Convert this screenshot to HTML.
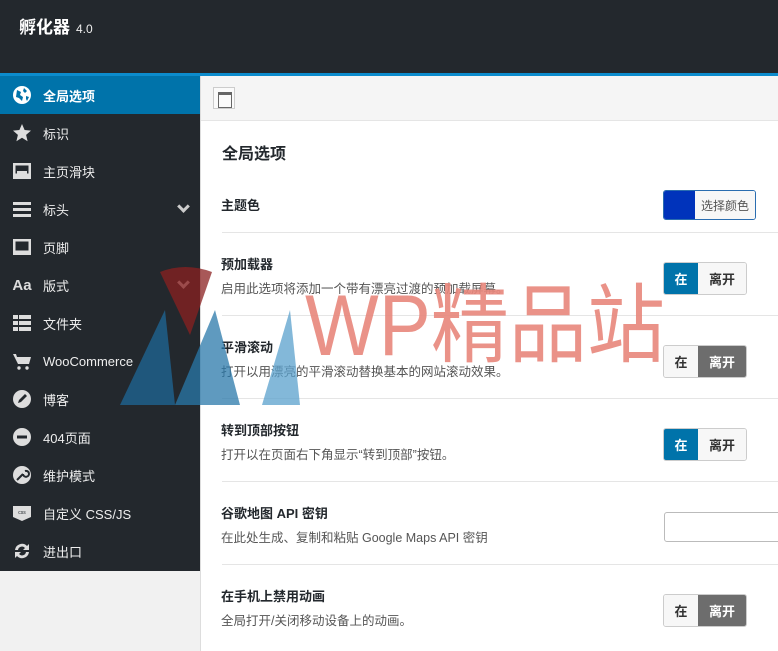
<!DOCTYPE html>
<html><head><meta charset="utf-8"><style>
*{margin:0;padding:0;box-sizing:border-box}
body{width:778px;height:651px;overflow:hidden;background:#fff;font-family:"Liberation Sans","Noto Sans CJK SC",sans-serif;position:relative}
.hdr{position:absolute;left:0;top:0;width:778px;height:74px;background:#23282d}
.strip{position:absolute;left:0;top:73px;width:778px;height:3px;background:#0c8ccd}
.logo{position:absolute;left:19px;top:13px;color:#fff;font-weight:bold;font-size:17px}
.logo span{font-size:12px;font-weight:normal;margin-left:6px;color:#eee}
.side{position:absolute;left:0;top:76px;width:200px;height:495px;background:#23282d}
.below{position:absolute;left:0;top:571px;width:200px;height:80px;background:#f1f1f1}
.item{height:38px;display:flex;align-items:center;color:#eee;font-size:13px;position:relative}
.item.act{background:#0073aa;color:#fff;font-weight:bold}
.ic{width:20px;height:20px;margin-left:12px;margin-right:11px;display:flex;align-items:center;justify-content:center}
.chev{position:absolute;right:12px;top:12px;width:9px;height:9px;border-right:3px solid #ccc;border-bottom:3px solid #ccc;transform:rotate(45deg)}
.main{position:absolute;left:200px;top:76px;width:578px;height:575px;border-left:1px solid #ddd}
.bar{height:45px;background:#f5f5f5;border-bottom:1px solid #e5e5e5;position:relative}
.bar .b{position:absolute;left:12px;top:11px;width:22px;height:22px;border:1px solid #ccc;background:#fafafa}
.bar .b:after{content:"";position:absolute;left:4px;top:4px;width:12px;height:12px;border:1px solid #666;border-top:3px solid #666}
h2{position:absolute;left:21px;top:64px;font-size:16px;color:#23282d}
.row{position:absolute;left:21px;width:557px;border-top:1px solid #e5e5e5}
.t{position:absolute;left:221px;font-size:13px;font-weight:bold;color:#23282d}
.d{position:absolute;left:221px;font-size:12.5px;color:#555}
.tg{position:absolute;left:663px;width:84px;height:33px;display:flex;border:1px solid #ccc;border-radius:3px;overflow:hidden;font-size:13px;font-weight:bold}
.tg div{display:flex;align-items:center;justify-content:center}
.tg .a{width:34px}.tg .o{flex:1}
.on .a{background:#0073aa;color:#fff}.on .o{background:#f7f7f7;color:#333}
.off .a{background:#f7f7f7;color:#333}.off .o{background:#6d6d6d;color:#fff}
</style></head><body>
<div class="hdr"></div><div class="strip"></div>
<div class="logo">孵化器<span>4.0</span></div>
<div class="side">
<div class="item act"><div class="ic"><svg width="20" height="20"><circle cx="10" cy="10" r="9" fill="#fff"/><path d="M5 5l4 2-1 3 3 2-1 4-3-3-3-1zM12 3l3 3-2 2-2-2zM14 11l3 1-2 4-1-2z" fill="#0073aa"/></svg></div>全局选项</div>
<div class="item"><div class="ic"><svg width="20" height="20"><path d="M10 1l2.6 6 6.4.6-4.9 4.3 1.5 6.3L10 14.8 4.4 18.2l1.5-6.3L1 7.6l6.4-.6z" fill="#ddd"/></svg></div>标识</div>
<div class="item"><div class="ic"><svg width="20" height="20"><rect x="1" y="2" width="18" height="16" fill="#ddd"/><rect x="3.5" y="4.5" width="13" height="8" fill="#23282d"/><rect x="5" y="10" width="10" height="3" fill="#ddd"/></svg></div>主页滑块</div>
<div class="item"><div class="ic"><svg width="20" height="20"><rect x="1" y="3" width="18" height="3" fill="#ddd"/><rect x="1" y="9" width="18" height="3" fill="#ddd"/><rect x="1" y="15" width="18" height="3" fill="#ddd"/></svg></div>标头<div class="chev"></div></div>
<div class="item"><div class="ic"><svg width="20" height="20"><rect x="1" y="2" width="18" height="16" fill="#ddd"/><rect x="3.5" y="4.5" width="13" height="9" fill="#23282d"/></svg></div>页脚</div>
<div class="item"><div class="ic" style="color:#ddd;font-weight:bold;font-size:15px">Aa</div>版式<div class="chev"></div></div>
<div class="item"><div class="ic"><svg width="20" height="20"><g fill="#ddd"><rect x="1" y="2" width="5" height="4"/><rect x="7" y="2" width="12" height="4"/><rect x="1" y="8" width="5" height="4"/><rect x="7" y="8" width="12" height="4"/><rect x="1" y="14" width="5" height="4"/><rect x="7" y="14" width="12" height="4"/></g></svg></div>文件夹</div>
<div class="item"><div class="ic"><svg width="20" height="20"><path d="M1 3h3l1 3h14l-2 7H6z" fill="#ddd"/><circle cx="7" cy="17" r="1.7" fill="#ddd"/><circle cx="15" cy="17" r="1.7" fill="#ddd"/></svg></div>WooCommerce</div>
<div class="item"><div class="ic"><svg width="20" height="20"><circle cx="10" cy="10" r="9" fill="#ddd"/><path d="M6 14l1-3 6-6 2 2-6 6z" fill="#23282d"/></svg></div>博客</div>
<div class="item"><div class="ic"><svg width="20" height="20"><circle cx="10" cy="10" r="9" fill="#ddd"/><rect x="5" y="8.5" width="10" height="3" fill="#23282d"/></svg></div>404页面</div>
<div class="item"><div class="ic"><svg width="20" height="20"><circle cx="10" cy="10" r="9" fill="#ddd"/><path d="M5 15l6-6M11 9a3 3 0 1 0 2-3" stroke="#23282d" stroke-width="2" fill="none"/></svg></div>维护模式</div>
<div class="item"><div class="ic"><svg width="20" height="20"><path d="M1 3h18v11l-9 4-9-4z" fill="#ddd"/><text x="10" y="11" font-size="5" text-anchor="middle" fill="#23282d">css</text></svg></div>自定义 CSS/JS</div>
<div class="item"><div class="ic"><svg width="20" height="20"><path d="M3 9a7 7 0 0 1 12-4l2-2v6h-6l2-2a4 4 0 0 0-7 2zM17 11a7 7 0 0 1-12 4l-2 2v-6h6l-2 2a4 4 0 0 0 7-2z" fill="#ddd"/></svg></div>进出口</div>
</div>
<div class="below"></div>
<div class="main"><div class="bar"><div class="b"></div></div><h2>全局选项</h2>
<div class="row" style="top:156px"></div><div class="row" style="top:239px"></div><div class="row" style="top:322px"></div><div class="row" style="top:405px"></div><div class="row" style="top:488px"></div>
</div>
<div class="t" style="top:195px">主题色</div>
<div style="position:absolute;left:663px;top:190px;width:93px;height:30px;border:1px solid #2a6db0;border-radius:3px;display:flex;overflow:hidden"><div style="width:31px;background:#0033bb"></div><div style="flex:1;background:#f7f7f7;font-size:12px;color:#555;display:flex;align-items:center;justify-content:center">选择颜色</div></div>
<div class="t" style="top:254px">预加载器</div><div class="d" style="top:278px">启用此选项将添加一个带有漂亮过渡的预加载屏幕。</div>
<div class="tg on" style="top:262px"><div class="a">在</div><div class="o">离开</div></div>
<div class="t" style="top:337px">平滑滚动</div><div class="d" style="top:361px">打开以用漂亮的平滑滚动替换基本的网站滚动效果。</div>
<div class="tg off" style="top:345px"><div class="a">在</div><div class="o">离开</div></div>
<div class="t" style="top:420px">转到顶部按钮</div><div class="d" style="top:444px">打开以在页面右下角显示“转到顶部”按钮。</div>
<div class="tg on" style="top:428px"><div class="a">在</div><div class="o">离开</div></div>
<div class="t" style="top:503px">谷歌地图 API 密钥</div><div class="d" style="top:527px">在此处生成、复制和粘贴 Google Maps API 密钥</div>
<div style="position:absolute;left:664px;top:512px;width:120px;height:30px;border:1px solid #bbb;border-radius:3px"></div>
<div class="t" style="top:586px">在手机上禁用动画</div><div class="d" style="top:610px">全局打开/关闭移动设备上的动画。</div>
<div class="tg off" style="top:594px"><div class="a">在</div><div class="o">离开</div></div>
<svg style="position:absolute;left:0;top:0" width="778" height="651">
<path d="M160 272 Q185 262 212 272 L190 335 Z" fill="#8b2020" opacity=".75"/>
<path d="M120 405 L165 310 L175 405 Z" fill="#1f5f8b" opacity=".85"/>
<path d="M175 405 L215 310 L240 405 Z" fill="#2a78aa" opacity=".75"/>
<path d="M262 405 L290 310 L300 405 Z" fill="#5aa0cc" opacity=".75"/>
<text x="305" y="355" font-size="86" textLength="360" lengthAdjust="spacingAndGlyphs" fill="#e8877c" opacity=".9" font-family="Liberation Sans,Noto Sans CJK SC,sans-serif">WP精品站</text>
</svg>
</body></html>
